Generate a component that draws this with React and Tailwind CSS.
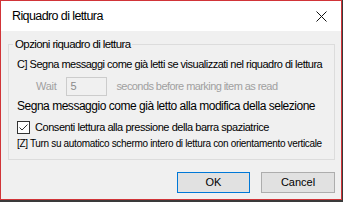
import React from "react";

export default function App() {
  return (
    <div className="w-[343px] h-[202px] bg-[#3a3a3a] font-['Liberation_Sans',sans-serif]">
      <div className="w-[342px] h-[200px] border border-[#d13438] bg-[#f0f0f0] flex flex-col">
        {/* Title bar */}
        <div className="h-[30px] bg-white flex items-center justify-between pl-[11px] pr-[10px]">
          <span className="text-[12.5px] text-black tracking-[-0.6px]">Riquadro di lettura</span>
          <svg width="11" height="11" viewBox="0 0 11 11" className="mr-[4px]">
            <path d="M0.5 0.5 L10.5 10.5 M10.5 0.5 L0.5 10.5" stroke="#111" strokeWidth="1" />
          </svg>
        </div>

        {/* Group box */}
        <div className="relative mt-[13px] ml-[7px] w-[327px] h-[116px] border border-[#dcdcdc]">
          <span className="absolute -top-[9px] left-[4px] bg-[#f0f0f0] px-[2px] text-[11.5px] text-black leading-[16px] tracking-[-0.6px]">
            Opzioni riquadro di lettura
          </span>
          <div className="flex flex-col pl-[8px] pt-[12px]">
            <span className="text-[11px] leading-[14px] tracking-[-0.5px] text-black">
              C] Segna messaggi come già letti se visualizzati nel riquadro di lettura
            </span>
            <div className="flex items-center mt-[6px] pl-[19px] text-[11px] text-[#a0a0a0]">
              <span className="tracking-[-0.3px]">Wait</span>
              <div className="ml-[10px] w-[41px] h-[19px] border border-[#cccccc] bg-[#f0f0f0] flex items-center pl-[3px] text-[#8a8a8a]">
                5
              </div>
              <span className="ml-[9px] tracking-[-0.57px]">seconds before marking item as read</span>
            </div>
            <span className="mt-[2px] text-[12px] leading-[16px] tracking-[-0.48px] text-black">
              Segna messaggio come già letto alla modifica della selezione
            </span>
            <div className="flex items-center mt-[6px] h-[15px]">
              <div className="w-[13px] h-[13px] border border-[#333] bg-white flex items-center justify-center">
                <svg width="11" height="11" viewBox="0 0 11 11">
                  <path d="M1.5 5.5 L4 8 L9.5 2.5" stroke="#333" strokeWidth="1" fill="none" />
                </svg>
              </div>
              <span className="ml-[5px] text-[11px] leading-[15px] tracking-[-0.45px] text-black">
                Consenti lettura alla pressione della barra spaziatrice
              </span>
            </div>
            <span className="mt-[2px] text-[10px] leading-[13px] tracking-[-0.33px] text-black">
              [Z] Turn su automatico schermo intero di lettura con orientamento verticale
            </span>
          </div>
        </div>

        {/* Buttons */}
        <div className="flex justify-end gap-[11px] mt-[12px] pr-[6px]">
          <button className="w-[73px] h-[21px] border border-[#0078d7] bg-[#e1e1e1] text-[11px] text-black">
            OK
          </button>
          <button className="w-[74px] h-[21px] border border-[#adadad] bg-[#e1e1e1] text-[11px] text-black">
            Cancel
          </button>
        </div>
      </div>
    </div>
  );
}
